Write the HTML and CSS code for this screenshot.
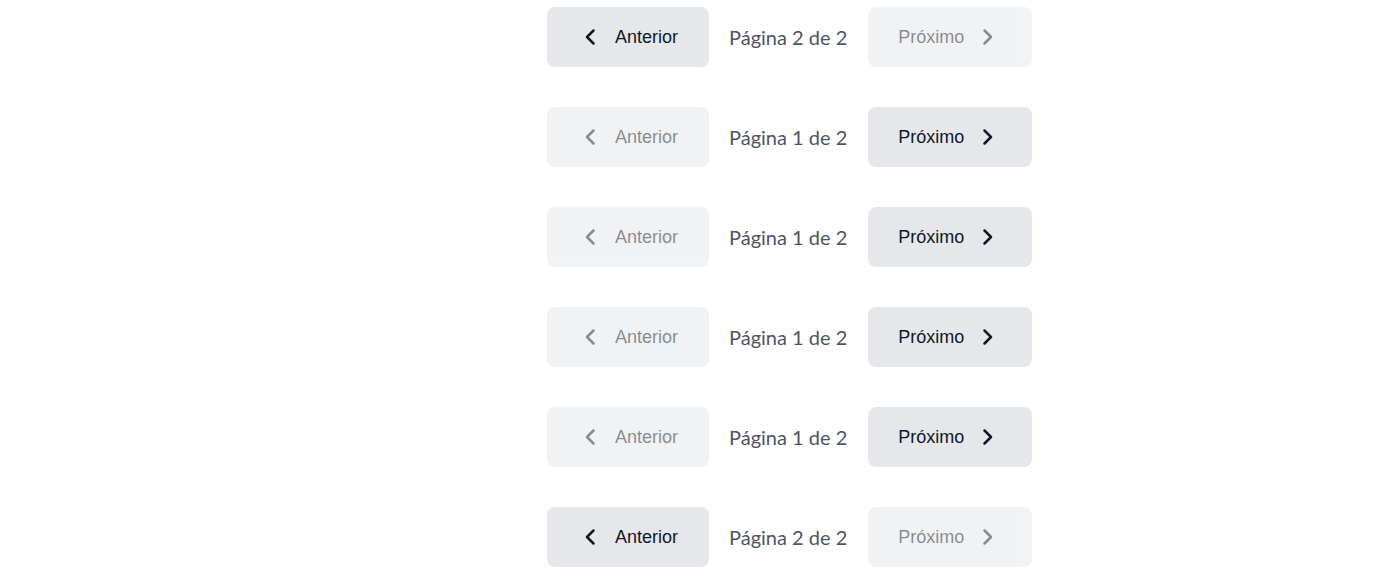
FILE: index.html
```html
<!DOCTYPE html>
<html lang="pt">
<head>
<meta charset="utf-8">
<title>Paginação</title>
<link rel="stylesheet" href="styles.css">
</head>
<body>
<main class="list">
  <nav class="pager">
    <button class="btn btn-prev"><svg class="ico" viewBox="0 0 24 24"><path d="M14.5 18.5 8 12l6.5-6.5"/></svg><span>Anterior</span></button>
    <span class="info">Página 2 de 2</span>
    <button class="btn btn-next" disabled><span>Próximo</span><svg class="ico" viewBox="0 0 24 24"><path d="M9.5 5.5 16 12l-6.5 6.5"/></svg></button>
  </nav>
  <nav class="pager">
    <button class="btn btn-prev" disabled><svg class="ico" viewBox="0 0 24 24"><path d="M14.5 18.5 8 12l6.5-6.5"/></svg><span>Anterior</span></button>
    <span class="info">Página 1 de 2</span>
    <button class="btn btn-next"><span>Próximo</span><svg class="ico" viewBox="0 0 24 24"><path d="M9.5 5.5 16 12l-6.5 6.5"/></svg></button>
  </nav>
  <nav class="pager">
    <button class="btn btn-prev" disabled><svg class="ico" viewBox="0 0 24 24"><path d="M14.5 18.5 8 12l6.5-6.5"/></svg><span>Anterior</span></button>
    <span class="info">Página 1 de 2</span>
    <button class="btn btn-next"><span>Próximo</span><svg class="ico" viewBox="0 0 24 24"><path d="M9.5 5.5 16 12l-6.5 6.5"/></svg></button>
  </nav>
  <nav class="pager">
    <button class="btn btn-prev" disabled><svg class="ico" viewBox="0 0 24 24"><path d="M14.5 18.5 8 12l6.5-6.5"/></svg><span>Anterior</span></button>
    <span class="info">Página 1 de 2</span>
    <button class="btn btn-next"><span>Próximo</span><svg class="ico" viewBox="0 0 24 24"><path d="M9.5 5.5 16 12l-6.5 6.5"/></svg></button>
  </nav>
  <nav class="pager">
    <button class="btn btn-prev" disabled><svg class="ico" viewBox="0 0 24 24"><path d="M14.5 18.5 8 12l6.5-6.5"/></svg><span>Anterior</span></button>
    <span class="info">Página 1 de 2</span>
    <button class="btn btn-next"><span>Próximo</span><svg class="ico" viewBox="0 0 24 24"><path d="M9.5 5.5 16 12l-6.5 6.5"/></svg></button>
  </nav>
  <nav class="pager">
    <button class="btn btn-prev"><svg class="ico" viewBox="0 0 24 24"><path d="M14.5 18.5 8 12l6.5-6.5"/></svg><span>Anterior</span></button>
    <span class="info">Página 2 de 2</span>
    <button class="btn btn-next" disabled><span>Próximo</span><svg class="ico" viewBox="0 0 24 24"><path d="M9.5 5.5 16 12l-6.5 6.5"/></svg></button>
  </nav>
</main>
</body>
</html>
```
FILE: styles.css
```css
html, body {
  margin: 0;
  background: #ffffff;
}
body {
  font-family: "Liberation Sans", Arial, sans-serif;
}
.list {
  display: flex;
  flex-direction: column;
  gap: 40px;
  padding: 7px 0 0 547px;
}
.pager {
  display: flex;
  align-items: center;
  gap: 20px;
}
.btn {
  display: flex;
  align-items: center;
  gap: 12px;
  height: 60px;
  border: 0;
  border-radius: 8px;
  background: #e5e7eb;
  color: #111827;
  font-family: "Liberation Sans", Arial, sans-serif;
  font-size: 18px;
  cursor: pointer;
}
.btn-prev {
  padding: 0 31px 0 32px;
}
.btn-next {
  gap: 11px;
  padding: 0 33px 0 30px;
}
.btn:disabled {
  opacity: 0.5;
  cursor: default;
}
.ico {
  width: 24px;
  height: 24px;
  fill: none;
  stroke: currentColor;
  stroke-width: 2.5;
  stroke-linecap: round;
  stroke-linejoin: round;
}
.info {
  font-family: Lato, "Open Sans", sans-serif;
  font-size: 20px;
  color: #4b5563;
  margin-right: 1px;
}
```
